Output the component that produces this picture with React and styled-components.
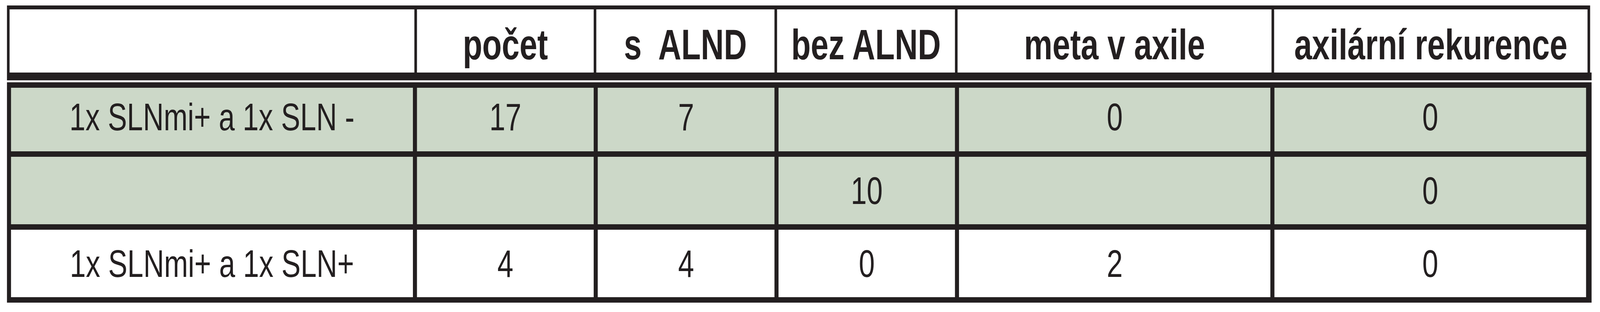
import React, { useEffect, useState } from "react";
import styled, { createGlobalStyle } from "styled-components";

const ink = "#231f20";
const sage = "#ccd8c8";
const DESIGN_WIDTH = 5514;

const GlobalStyle = createGlobalStyle`
  html, body {
    margin: 0;
    padding: 0;
    background: #fff;
    overflow: hidden;
  }

  body {
    font-family: "Liberation Sans", Arial, sans-serif;
    color: ${ink};
  }
`;

// the table is drawn at its 5514px design width and squeezed to the window
const Page = styled.div`
  width: ${DESIGN_WIDTH}px;
  height: 800px;
  box-sizing: border-box;
  padding: 14px 0 0 24px;
  transform-origin: 0 0;
`;

const HeaderBlock = styled.div`
  width: 5461px;
  border-bottom: 20px solid ${ink};
`;

const HeaderGrid = styled.div`
  display: grid;
  width: 5456px;
  box-sizing: border-box;
  grid-template-columns: 1395px 609px 614px 613px 1082px 1080px;
  grid-template-rows: 162px;
  column-gap: 9px;
  padding: 10px 9px 0 9px;
  background: ${ink};
`;

const HeadCell = styled.div`
  display: flex;
  align-items: center;
  justify-content: center;
  padding-top: 16px;
  box-sizing: border-box;
  background: #fff;
  font-size: 110px;
  font-weight: 700;
  white-space: pre;
`;

const BodyGrid = styled.div`
  display: grid;
  width: 5461px;
  box-sizing: border-box;
  margin-top: 5px;
  grid-template-columns: 1385px 609px 609px 608px 1073px 1074px;
  grid-template-rows: 163px 173px 173px;
  gap: 14px;
  padding: 14px 19px 14px 14px;
  background: ${ink};
`;

const Cell = styled.div`
  display: flex;
  align-items: center;
  justify-content: center;
  box-sizing: border-box;
  padding-bottom: ${(p) => (p.$lift ? "14px" : "0")};
  background: ${(p) => (p.$shaded ? sage : "#fff")};
  font-size: 99px;
  font-weight: 400;
  white-space: pre;
`;

const headers = ["", "počet", "s  ALND", "bez ALND", "meta v axile", "axilární rekurence"];

const rows = [
  { shaded: true, lift: true, cells: ["1x SLNmi+ a 1x SLN -", "17", "7", "", "0", "0"] },
  { shaded: true, lift: false, cells: ["", "", "", "10", "", "0"] },
  { shaded: false, lift: false, cells: ["1x SLNmi+ a 1x SLN+", "4", "4", "0", "2", "0"] },
];

function useFit() {
  const read = () => Math.min(1, window.innerWidth / DESIGN_WIDTH);
  const [k, setK] = useState(read);
  useEffect(() => {
    const onResize = () => setK(read());
    window.addEventListener("resize", onResize);
    return () => window.removeEventListener("resize", onResize);
  }, []);
  return k;
}

export default function App() {
  const k = useFit();
  return (
    <>
      <GlobalStyle />
      <Page style={{ transform: `scaleX(${k})` }}>
        <HeaderBlock>
          <HeaderGrid>
            {headers.map((h, i) => (
              <HeadCell key={i}>{h}</HeadCell>
            ))}
          </HeaderGrid>
        </HeaderBlock>
        <BodyGrid>
          {rows.map((row, r) =>
            row.cells.map((c, i) => (
              <Cell key={`${r}-${i}`} $shaded={row.shaded} $lift={row.lift}>
                {c}
              </Cell>
            ))
          )}
        </BodyGrid>
      </Page>
    </>
  );
}
